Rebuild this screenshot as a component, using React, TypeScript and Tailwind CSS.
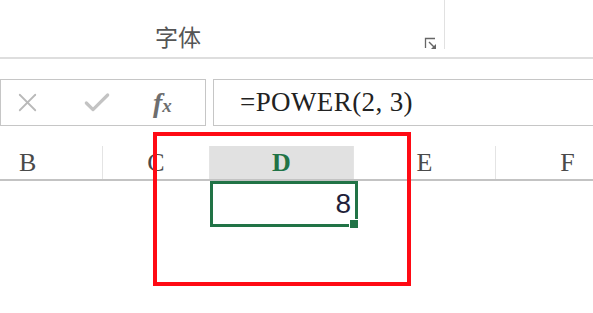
import { Check, X } from 'lucide-react';

const serif = { fontFamily: '"Liberation Serif", "Noto Sans CJK SC", serif' };

const columns = [
  { name: 'B', width: 'w-[103px]', align: 'justify-start pl-[19px]' },
  { name: 'C', width: 'w-[107px]', align: 'justify-center' },
  { name: 'D', width: 'w-[144px]', align: 'justify-center', active: true },
  { name: 'E', width: 'w-[142px]', align: 'justify-center' },
  { name: 'F', width: 'w-[143px]', align: 'justify-center' },
];

function LauncherIcon() {
  return (
    <svg width="13" height="13" viewBox="0 0 13 13" className="text-[#666]">
      <polyline points="1.5,11 1.5,1.5 11,1.5" fill="none" stroke="currentColor" strokeWidth="1.3" />
      <line x1="5" y1="5" x2="10" y2="10" stroke="currentColor" strokeWidth="1.4" />
      <polygon points="12,7 12,12 7,12" fill="currentColor" />
    </svg>
  );
}

export default function App() {
  return (
    <div className="relative w-[593px] h-[313px] overflow-hidden bg-white flex">
      {/* window edge */}
      <div className="w-[2px] flex flex-col">
        <div className="h-[24px] bg-[#1a7fd4]" />
        <div className="flex-1 bg-[#3a3a3a]" />
      </div>

      <div className="flex-1 flex flex-col">
        {/* ribbon group */}
        <div className="h-[57px] flex">
          <div className="w-[444px] flex items-end pb-[9px]">
            <span
              className="ml-[155px] text-[23px] leading-none text-[#555]"
              style={{ fontFamily: '"Noto Sans CJK SC", sans-serif' }}
            >
              字体
            </span>
            <div className="ml-auto mr-[7px] mb-[-2px]">
              <LauncherIcon />
            </div>
          </div>
          <div className="w-[1px] h-[49px] bg-[#e1e1e1]" />
        </div>
        <div className="h-[2px] bg-[#dedede]" />

        {/* formula bar */}
        <div className="mt-[20px] h-[47px] flex gap-[7px] pr-[1px]">
          <div className="w-[206px] border-[1.5px] border-[#c6c6c6] flex items-center">
            <X className="ml-[11px] w-[31px] h-[31px] text-[#b9b9b9]" strokeWidth={1.4} />
            <Check className="ml-[38px] w-[32px] h-[32px] text-[#c3c3c3]" strokeWidth={2.4} />
            <span
              className="ml-[40px] text-[#6e6e6e] italic font-bold leading-none"
              style={{ fontFamily: '"Liberation Serif", serif' }}
            >
              <span className="text-[28px]">f</span>
              <span className="text-[19px]">x</span>
            </span>
          </div>
          <div className="flex-1 border-[1.5px] border-[#c6c6c6] flex items-center pl-[26px]">
            <span className="text-[27px] leading-none tracking-[0.4px] text-[#222]" style={serif}>
              =POWER(2, 3)
            </span>
          </div>
        </div>

        {/* column headers */}
        <div className="mt-[20px] h-[35px] flex border-b-2 border-[#c3c3c3]">
          {columns.map((c) => (
            <div
              key={c.name}
              className={`${c.width} shrink-0 flex items-end pb-[3px] ${c.align} ${
                c.name !== 'F' ? 'border-r border-[#e4e4e4]' : ''
              } ${c.active ? 'bg-[#e1e1e1] text-[#217346] font-bold' : 'text-[#4a4a4a]'}`}
            >
              <span className="text-[26px] leading-none" style={serif}>
                {c.name}
              </span>
            </div>
          ))}
        </div>

        <div className="flex-1" />
      </div>

      {/* active cell */}
      <div className="absolute left-[210px] top-[181px] w-[148px] h-[46px] border-[3px] border-[#217346] flex items-center justify-end pr-[4px]">
        <span
          className="text-[28px] leading-none text-[#1f1f3a]"
          style={{ fontFamily: '"Liberation Sans", Arial, sans-serif' }}
        >
          8
        </span>
        <div className="absolute right-[-4px] bottom-[-5px] w-[10px] h-[10px] bg-[#217346] border border-white" />
      </div>

      {/* highlight */}
      <div className="absolute left-[153px] top-[132px] w-[258px] h-[154px] border-4 border-[#ff0a14]" />
    </div>
  );
}
